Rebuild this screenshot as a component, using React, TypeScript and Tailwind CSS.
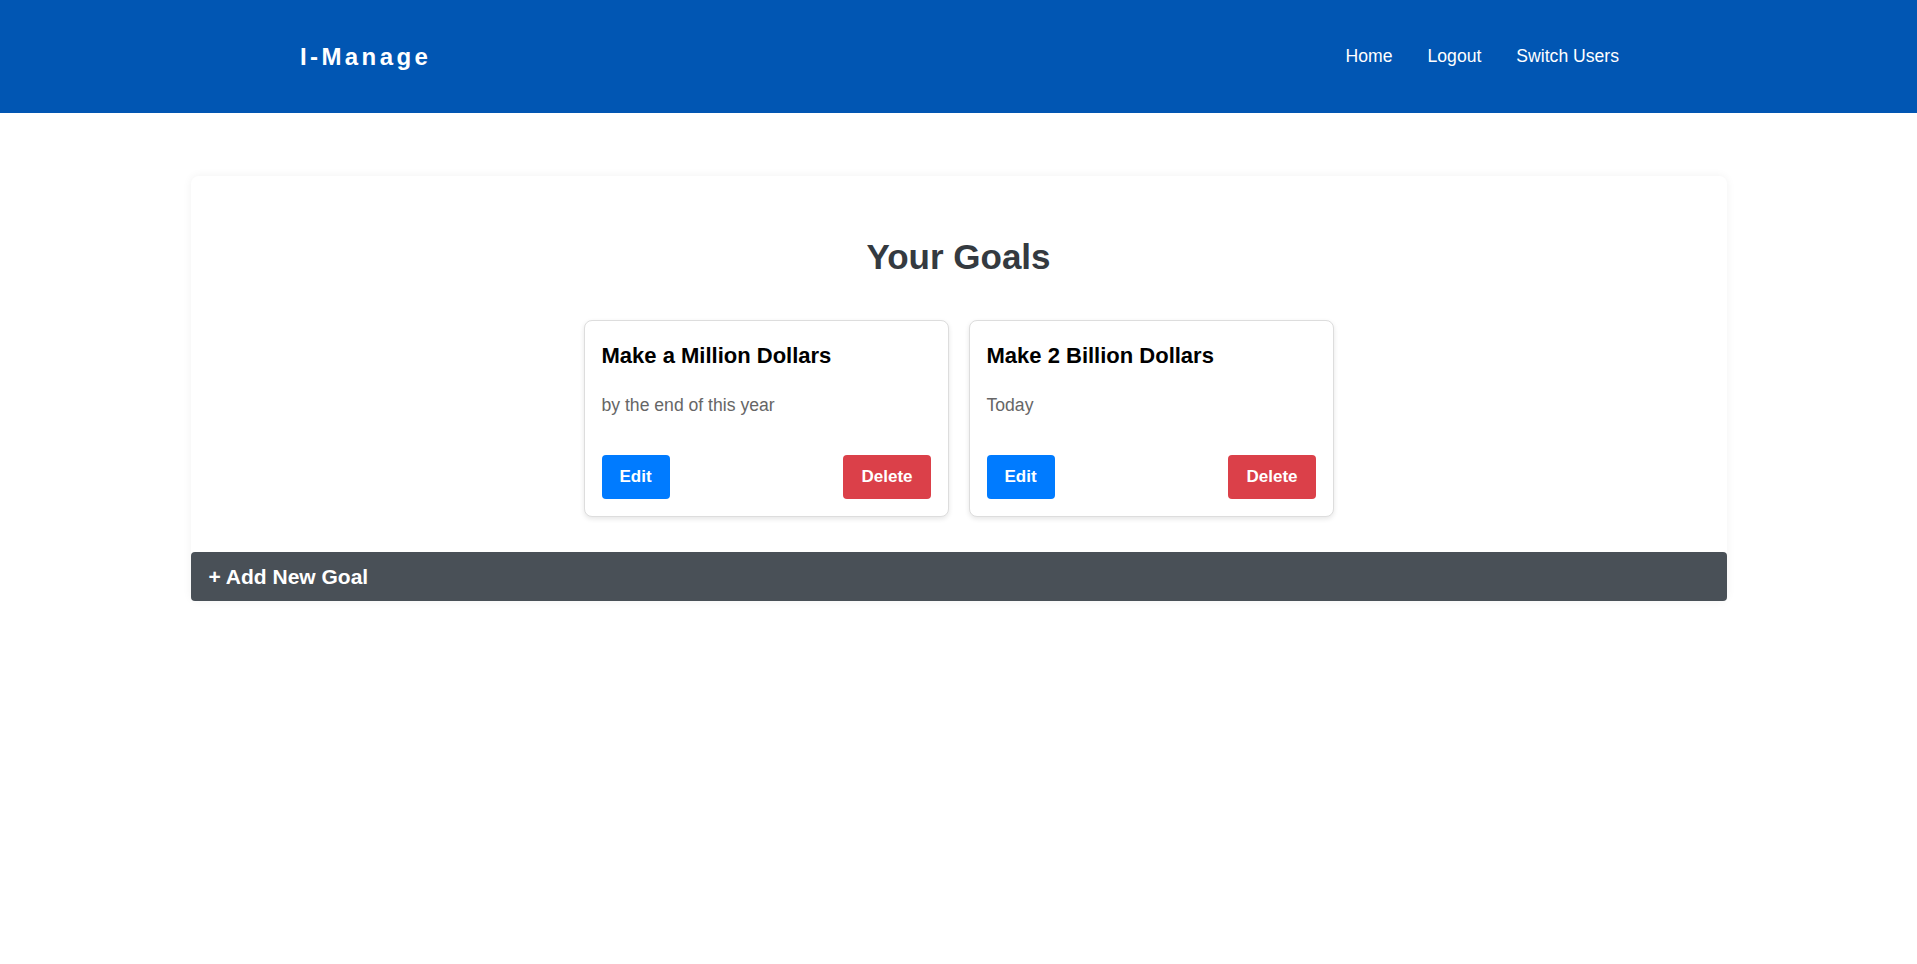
const goals = [
  { id: 1, title: "Make a Million Dollars", description: "by the end of this year" },
  { id: 2, title: "Make 2 Billion Dollars", description: "Today" },
];

function GoalCard({ title, description }: { title: string; description: string }) {
  return (
    <div className="w-[365px] h-[197px] bg-white border border-[#dddddd] rounded-lg shadow-[0_2px_5px_rgba(0,0,0,0.1)] px-[17px] pt-[22px] pb-[17px] flex flex-col">
      <h3 className="text-[22px] font-bold text-black leading-[25px]">{title}</h3>
      <p className="mt-[27px] text-[17.6px] leading-[20px] text-[#666666]">{description}</p>
      <div className="mt-auto flex items-center justify-between">
        <button className="h-[44px] px-[18px] rounded bg-[#007bff] text-white text-[17px] font-bold">
          Edit
        </button>
        <button className="h-[44px] px-[18px] rounded bg-[#db4049] text-white text-[17px] font-bold">
          Delete
        </button>
      </div>
    </div>
  );
}

export default function App() {
  return (
    <div className="min-h-screen bg-white font-['Liberation_Sans',Arial,sans-serif]">
      <header className="h-[113px] bg-[#0156b3] flex items-center justify-between pl-[300px] pr-[298px]">
        <span className="text-white text-[24px] font-bold tracking-[3.4px]">I-Manage</span>
        <nav className="flex items-center gap-[35px] text-white text-[17.6px]">
          <a>Home</a>
          <a>Logout</a>
          <a>Switch Users</a>
        </nav>
      </header>

      <main className="w-[1536px] mx-auto mt-[63px] bg-white rounded-lg shadow-[0_0_10px_rgba(0,0,0,0.06)] pt-[61px]">
        <h2 className="text-center text-[35px] leading-[39px] font-bold text-[#343a40]">Your Goals</h2>
        <div className="mt-[44px] flex justify-center gap-[20px]">
          {goals.map((g) => (
            <GoalCard key={g.id} title={g.title} description={g.description} />
          ))}
        </div>
        <div className="mt-[35px] h-[49px] rounded bg-[#495057] flex items-center px-[18px]">
          <span className="text-white text-[21px] font-bold">+ Add New Goal</span>
        </div>
      </main>
    </div>
  );
}
